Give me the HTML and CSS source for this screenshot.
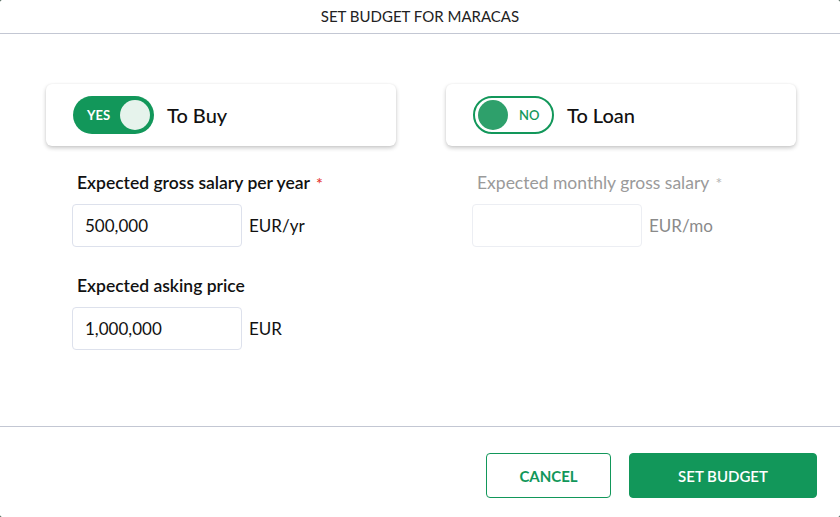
FILE: index.html
```html
<!DOCTYPE html>
<html>
<head>
<meta charset="utf-8">
<link rel="stylesheet" href="styles.css">
</head>
<body>
<div class="modal">
  <header class="modal-header">SET BUDGET FOR MARACAS</header>
  <main class="modal-body">
    <section class="col">
      <div class="card">
        <div class="toggle toggle-on"><span class="toggle-text">YES</span><span class="knob"></span></div>
        <span class="card-title">To Buy</span>
      </div>
      <div class="field">
        <label class="label">Expected gross salary per year <span class="req">*</span></label>
        <div class="input-row">
          <div class="input">500,000</div>
          <span class="unit">EUR/yr</span>
        </div>
      </div>
      <div class="field field-second">
        <label class="label">Expected asking price</label>
        <div class="input-row">
          <div class="input">1,000,000</div>
          <span class="unit">EUR</span>
        </div>
      </div>
    </section>
    <section class="col">
      <div class="card">
        <div class="toggle toggle-off"><span class="knob"></span><span class="toggle-text">NO</span></div>
        <span class="card-title">To Loan</span>
      </div>
      <div class="field disabled">
        <label class="label">Expected monthly gross salary <span class="req">*</span></label>
        <div class="input-row">
          <div class="input"></div>
          <span class="unit">EUR/mo</span>
        </div>
      </div>
    </section>
  </main>
  <footer class="modal-footer">
    <button class="btn btn-outline">CANCEL</button>
    <button class="btn btn-primary">SET BUDGET</button>
  </footer>
</div>
</body>
</html>
```

FILE: styles.css
```css
* { box-sizing: border-box; }
html, body { margin: 0; padding: 0; }
body {
  background: #1d3b2c;
  font-family: Lato, "Open Sans", sans-serif;
  color: #1a1a1a;
}
.modal {
  width: 840px;
  height: 517px;
  background: #fff;
  border-radius: 2px;
  display: flex;
  flex-direction: column;
}
.modal-header {
  height: 34px;
  border-bottom: 1px solid #c3c7d3;
  text-align: center;
  font-size: 15px;
  line-height: 32px;
  color: #222;
}
.modal-body {
  flex: 1;
  display: grid;
  grid-template-columns: 350px 350px;
  column-gap: 50px;
  padding: 50px 44px 0 46px;
  border-bottom: 1px solid #c3c7d3;
}
.card {
  height: 62px;
  border-radius: 6px;
  background: #fff;
  box-shadow: 0 2px 4px rgba(0,0,0,0.22), 0 0 2px rgba(0,0,0,0.06);
  display: flex;
  align-items: center;
  padding-left: 27px;
  gap: 13px;
}
.card-title {
  font-size: 20px;
  font-weight: 500;
  color: #111;
}
.toggle {
  width: 81px;
  height: 38px;
  border-radius: 19px;
  display: flex;
  align-items: center;
  font-size: 13px;
  font-weight: 700;
}
.toggle-on {
  background: #12975a;
  color: #fff;
  padding: 0 4px 0 14px;
  justify-content: space-between;
}
.toggle-on .knob {
  width: 30px;
  height: 30px;
  border-radius: 50%;
  background: #e6f3ec;
}
.toggle-off {
  border: 2px solid #12975a;
  background: #fff;
  color: #12975a;
  padding: 0 0 0 3px;
  gap: 11px;
  font-weight: 600;
}
.toggle-off .knob {
  width: 30px;
  height: 30px;
  border-radius: 50%;
  background: #2ea06b;
}
.field {
  margin-top: 27px;
  padding-left: 26px;
}
.field-second {
  margin-top: 29px;
}
.label {
  display: block;
  font-size: 17.5px;
  line-height: 20px;
  font-weight: 600;
  color: #111;
  padding-left: 5px;
  margin-bottom: 11px;
}
.req {
  color: #e53935;
  margin-left: 2px;
  font-size: 16px;
}
.input-row {
  display: flex;
  align-items: center;
  gap: 7px;
}
.input {
  width: 170px;
  height: 43px;
  border: 1px solid #dde1ec;
  border-radius: 4px;
  padding: 0 12px;
  display: flex;
  align-items: center;
  font-size: 17px;
  color: #111;
}
.unit {
  font-size: 17px;
  color: #111;
}
.disabled .label {
  font-weight: 400;
  color: #9a9a9a;
}
.disabled .req {
  color: #b5b5b5;
}
.disabled .input {
  border-color: #eceef3;
}
.disabled .unit {
  color: #8a8a8a;
}
.modal-footer {
  height: 90px;
  display: flex;
  justify-content: flex-end;
  align-items: flex-start;
  padding: 26px 23px 0 0;
  gap: 18px;
}
.btn {
  height: 45px;
  border-radius: 4px;
  font-family: Lato, sans-serif;
  font-size: 15px;
  font-weight: 700;
  cursor: pointer;
}
.btn-outline {
  width: 125px;
  background: #fff;
  border: 1px solid #12975a;
  color: #12975a;
}
.btn-primary {
  width: 188px;
  background: #12975a;
  border: 1px solid #12975a;
  color: #fff;
  font-weight: 600;
}
```
